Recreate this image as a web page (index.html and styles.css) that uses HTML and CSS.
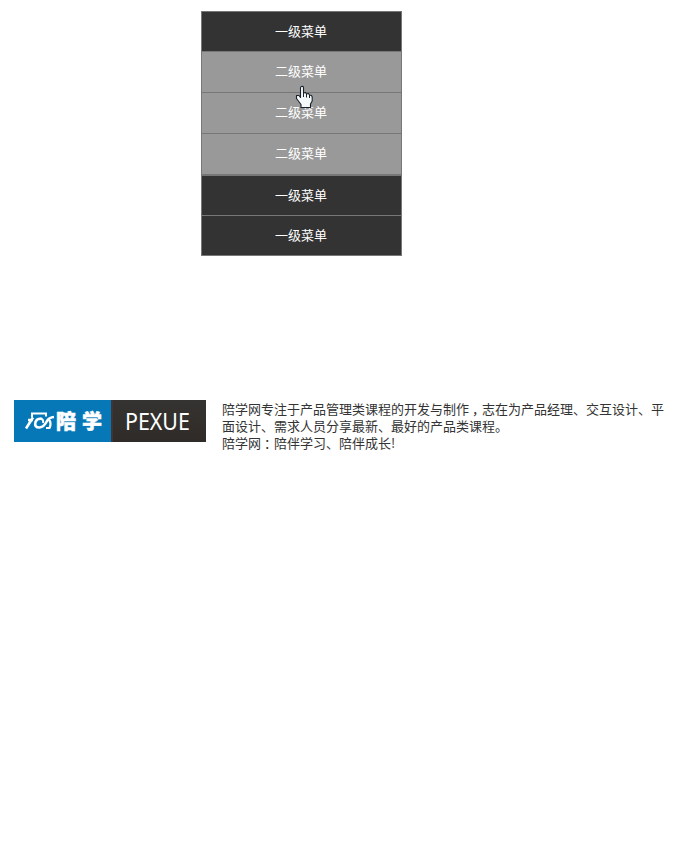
FILE: index.html
```html
<!DOCTYPE html>
<html lang="zh-CN">
<head>
<meta charset="utf-8">
<title>菜单</title>
<link rel="stylesheet" href="styles.css">
</head>
<body>
<nav class="menu">
  <ul class="list">
    <li class="item">一级菜单</li>
    <li class="item sub hovered">二级菜单
      <svg class="cursor" width="19" height="24" viewBox="0 0 19 24">
        <path d="M6.5 1.5Q8.500 .8 8.500 3V8L10.500 7.500L11.500 9L13.500 8.500L14.500 10L16.500 10.500L17.200 12V16L15.500 19V22.500H6V19.500L1.500 13.500V10.500L4 10.500L5.500 12.500V3Q5.500 1.800 6.500 1.500Z" fill="#f4f8f8" stroke="#17202a" stroke-width="1.1" stroke-linejoin="round"/>
        <path d="M8.500 8V12M11.500 9V12.500M14.500 10V13" fill="none" stroke="#17202a"/>
      </svg>
    </li>
    <li class="item sub">二级菜单</li>
    <li class="item sub last">二级菜单</li>
    <li class="item">一级菜单</li>
    <li class="item">一级菜单</li>
  </ul>
</nav>
<footer class="about">
  <div class="logo">
    <div class="brand">
      <svg class="mark" width="31" height="20" viewBox="0 0 31 20">
        <g fill="none" stroke="#fff">
          <path d="M8 6.500V2.500H22V5.500" stroke-width="2"/>
          <path d="M9 6.500L2 17.500M4 9H9" stroke-width="2.600"/>
          <path d="M18 8Q13 7 11.500 11Q10 16.500 15.500 16.500Q20 16 23 10Q25 6.500 30 6" stroke-width="2.600"/>
          <path d="M16 7.500Q20 8 19 12" stroke-width="2"/>
          <path d="M24.500 8Q28 12 25.500 17H22" stroke-width="2.200"/>
        </g>
      </svg>
      <span class="name">陪</span><span class="name">学</span>
    </div>
    <div class="latin"><span class="word">PEXUE</span></div>
  </div>
  <div class="text">
    <p>陪学网专注于产品管理类课程的开发与制作<span class="mid">，</span>志在为产品经理、交互设计、平<br>面设计、需求人员分享最新、最好的产品类课程。</p>
    <p>陪学网<span class="mid">：</span>陪伴学习、陪伴成长!</p>
  </div>
</footer>
</body>
</html>
```
FILE: styles.css
```css
body {
  margin: 0;
  background: #fff;
  font: 13px/17px "Noto Sans CJK SC", sans-serif;
  color: #333;
}
.menu {
  padding: 11px 0 0 201px;
}
.list {
  width: 199px;
  margin: 0;
  padding: 0;
  list-style: none;
  border: 1px solid #777;
  border-bottom: 0;
}
.item {
  height: 39px;
  line-height: 38px;
  border-bottom: 1px solid #777;
  background: #333;
  color: #fff;
  text-align: center;
  text-indent: -1px;
}
.sub {
  height: 40px;
  background: #999;
}
.last {
  border-bottom-width: 2px;
}
.hovered {
  position: relative;
}
.cursor {
  position: absolute;
  left: 93px;
  top: 33px;
  z-index: 1;
}
.about {
  display: flex;
  margin: 144px 0 0 14px;
}
.logo {
  display: flex;
  width: 192px;
  height: 42px;
  color: #fff;
}
.brand {
  display: flex;
  align-items: center;
  box-sizing: border-box;
  width: 97px;
  padding-left: 10px;
  background: #0678b7;
}
.mark {
  margin-right: 1px;
}
.name {
  width: 26px;
  font-size: 20px;
  font-weight: 900;
  line-height: 40px;
  -webkit-text-stroke: 0.5px #fff;
}
.latin {
  box-sizing: border-box;
  width: 95px;
  padding-left: 12px;
  border-left: 2px solid #433;
  background: linear-gradient(#353331, #2f2b28);
  font: 23px/42px "Noto Sans", sans-serif;
}
.word {
  display: inline-block;
  transform: scaleX(0.93);
  transform-origin: left;
}
.text {
  margin: 0 0 0 16px;
  white-space: nowrap;
}
.text p {
  margin: 0;
}
.mid {
  display: inline-block;
  width: 13px;
  line-height: 16px;
  text-indent: 3px;
}
```
